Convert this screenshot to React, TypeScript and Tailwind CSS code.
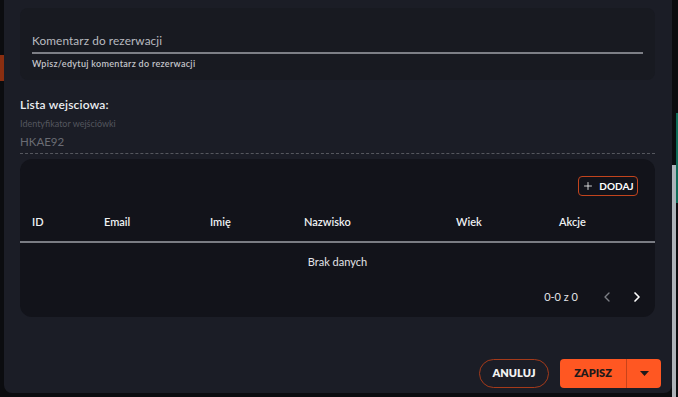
import { ChevronLeft, ChevronRight, Plus } from "lucide-react";

const columns = [
  { label: "ID", w: "w-[72px]" },
  { label: "Email", w: "w-[106px]" },
  { label: "Imię", w: "w-[94px]" },
  { label: "Nazwisko", w: "w-[152px]" },
  { label: "Wiek", w: "w-[103px]" },
  { label: "Akcje", w: "flex-1" },
];

export default function App() {
  return (
    <div
      className="relative w-[678px] h-[397px] overflow-hidden bg-[#0b0c0f]"
      style={{ fontFamily: "Lato, 'Noto Sans', sans-serif" }}
    >
      {/* page behind the dialog */}
      <div className="absolute left-0 top-[55px] w-[4px] h-[26px] bg-[#8a2e10]" />
      <div className="absolute right-[2px] top-[165px] w-[4px] h-[240px] bg-[#aeb3b9]" />
      <div className="absolute right-0 top-[113px] w-[2px] h-[90px] bg-[#0f6b58]" />

      <div className="relative ml-[4px] w-[668px] h-[393px] rounded-b-lg bg-[#1b1d26] pl-4 pr-[17px] pt-2">
        {/* comment card */}
        <div className="h-[72px] rounded-lg bg-[#181a21] px-3 pt-[25px]">
          <div className="border-b-2 border-[#7d7f86] pb-[3px] text-[11.8px] leading-[16px] tracking-[0.1px] text-[#b9bac0]">
            Komentarz do rezerwacji
          </div>
          <div className="mt-[4px] text-[9px] leading-[11px] tracking-[0.3px] font-semibold text-[#c4c5ca]">
            Wpisz/edytuj komentarz do rezerwacji
          </div>
        </div>

        <div className="mt-[17px] text-[12px] leading-[16px] font-semibold tracking-[0.2px] text-[#eceef2]">
          Lista wejsciowa:
        </div>
        <div className="mt-[5px] text-[9px] leading-[11px] text-[#54565e]">Identyfikator wejściówki</div>
        <div className="mt-[5px] border-b border-dashed border-[#55575e] pb-[3px] text-[11.5px] leading-[16px] text-[#6a6c74]">
          HKAE92
        </div>

        {/* table card */}
        <div className="mt-[5px] h-[158px] rounded-xl bg-[#12131a]">
          <div className="flex justify-end pt-[17px] pr-[17px]">
            <button className="flex h-[20px] w-[60px] items-center justify-center gap-[5px] rounded border border-[#c2441d] text-[10px] font-bold text-white">
              <Plus size={12} strokeWidth={1.6} />
              DODAJ
            </button>
          </div>
          <div className="mt-[19px] flex h-[28px] items-start border-b-2 border-[#7a7c83] pl-3 text-[11px] leading-[14px] font-semibold text-[#eef0f3]">
            {columns.map((c) => (
              <div key={c.label} className={c.w}>
                {c.label}
              </div>
            ))}
          </div>
          <div className="pt-[12px] text-center text-[11px] leading-[14px] text-[#e3e4e8]">Brak danych</div>
          <div className="mt-[20px] flex items-center justify-end pr-[10px] text-[11px] text-[#e3e4e8]">
            <span className="mr-[21px]">0-0 z 0</span>
            <ChevronLeft size={16} className="mr-[14px] text-[#7d7f86]" />
            <ChevronRight size={16} className="text-white" strokeWidth={2.5} />
          </div>
        </div>

        {/* footer */}
        <div className="mt-[42px] flex justify-end gap-[11px]">
          <button className="h-[29px] w-[70px] rounded-full border border-[#a53a1a] text-[11px] font-extrabold text-[#f2f2f2]">
            ANULUJ
          </button>
          <div className="mr-[-6px] flex h-[29px] w-[101px] overflow-hidden rounded bg-[#ff5722] text-[#1e1a1a]">
            <div className="flex w-[67px] items-center justify-center border-r border-[#c8431a] text-[11px] font-extrabold">
              ZAPISZ
            </div>
            <div className="flex flex-1 items-center justify-center">
              <svg width="9" height="5" viewBox="0 0 9 5">
                <path d="M0 0h9L4.5 5z" fill="#1e1a1a" />
              </svg>
            </div>
          </div>
        </div>
      </div>
    </div>
  );
}
